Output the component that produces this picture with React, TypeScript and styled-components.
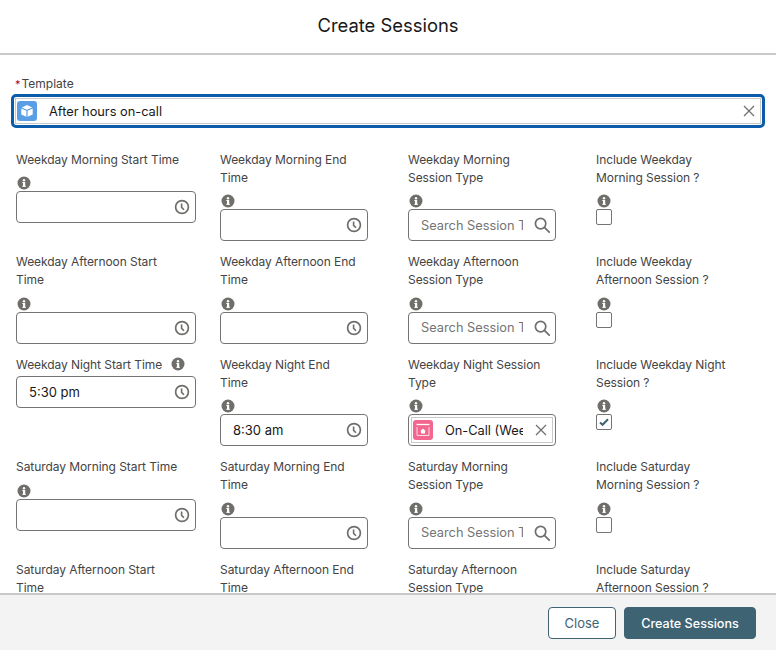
import styled, { createGlobalStyle } from "styled-components";

const GlobalStyle = createGlobalStyle`
  html, body {
    margin: 0;
    padding: 0;
    background: #fff;
  }
  body {
    font-family: Inter, "Liberation Sans", sans-serif;
    color: #181818;
  }
`;

type FieldDef = {
  label: string;
  kind: "time" | "search" | "lookup" | "check";
  value?: string;
  checked?: boolean;
  inlineInfo?: boolean;
};

const rows: FieldDef[][] = [
  [
    { label: "Weekday Morning Start Time", kind: "time" },
    { label: "Weekday Morning End Time", kind: "time" },
    { label: "Weekday Morning Session Type", kind: "search" },
    { label: "Include Weekday Morning Session ?", kind: "check" },
  ],
  [
    { label: "Weekday Afternoon Start Time", kind: "time" },
    { label: "Weekday Afternoon End Time", kind: "time" },
    { label: "Weekday Afternoon Session Type", kind: "search" },
    { label: "Include Weekday Afternoon Session ?", kind: "check" },
  ],
  [
    { label: "Weekday Night Start Time", kind: "time", value: "5:30 pm", inlineInfo: true },
    { label: "Weekday Night End Time", kind: "time", value: "8:30 am" },
    { label: "Weekday Night Session Type", kind: "lookup", value: "On-Call (Weekday)" },
    { label: "Include Weekday Night Session ?", kind: "check", checked: true },
  ],
  [
    { label: "Saturday Morning Start Time", kind: "time" },
    { label: "Saturday Morning End Time", kind: "time" },
    { label: "Saturday Morning Session Type", kind: "search" },
    { label: "Include Saturday Morning Session ?", kind: "check" },
  ],
  [
    { label: "Saturday Afternoon Start Time", kind: "time" },
    { label: "Saturday Afternoon End Time", kind: "time" },
    { label: "Saturday Afternoon Session Type", kind: "search" },
    { label: "Include Saturday Afternoon Session ?", kind: "check" },
  ],
];

const InfoIcon = () => (
  <svg width="14" height="14" viewBox="0 0 14 14">
    <circle cx="7" cy="7" r="6.5" fill="#706e6b" />
    <rect x="6" y="6" width="2.2" height="4.6" fill="#fff" />
    <rect x="5.3" y="6" width="1.5" height="1" fill="#fff" />
    <rect x="5.3" y="9.8" width="3.6" height="1" fill="#fff" />
    <circle cx="7" cy="4.2" r="1.2" fill="#fff" />
  </svg>
);

const ClockIcon = () => (
  <svg width="16" height="16" viewBox="0 0 16 16" fill="none" stroke="#706e6b">
    <circle cx="8" cy="8" r="6.4" strokeWidth="1.7" />
    <path d="M7.6 4.4v4l2.4 2.4" strokeWidth="1.6" />
  </svg>
);

const SearchIcon = () => (
  <svg width="16" height="16" viewBox="0 0 16 16" fill="none" stroke="#706e6b" strokeWidth="1.7">
    <circle cx="6.6" cy="6.6" r="5.2" />
    <path d="M10.4 10.4l4.8 4.8" strokeLinecap="round" />
  </svg>
);

const CloseIcon = () => (
  <svg width="12" height="12" viewBox="0 0 12 12" stroke="#706e6b" strokeWidth="1.2">
    <path d="M1 1l10 10M11 1L1 11" />
  </svg>
);

const CubeIcon = () => (
  <svg width="14" height="14" viewBox="0 0 14 14" fill="#fff">
    <path d="M7 1l5.2 2.4L7 5.8 1.8 3.4z" />
    <path d="M1.3 4.5l5.1 2.3v6L1.3 10.4z" />
    <path d="M12.7 4.5L7.6 6.8v6l5.1-2.4z" />
  </svg>
);

const CalendarIcon = () => (
  <svg width="16" height="16" viewBox="0 0 16 16" fill="none">
    <path d="M1.5 2.5h13" stroke="#fff" strokeWidth="1.3" />
    <path d="M2 5v8.5h12V5" stroke="#fff" strokeWidth="1" strokeOpacity=".75" />
    <path d="M8 6.6l2.8 2.6H10v2.2H6V9.2h-.8z" fill="#fff" />
  </svg>
);

const CheckIcon = () => (
  <svg width="10" height="8" viewBox="0 0 10 8" fill="none" stroke="#3e6373" strokeWidth="2">
    <path d="M1 4.4l2.6 2.4L9 1.2" />
  </svg>
);

const Control = ({ field }: { field: FieldDef }) => {
  if (field.kind === "check") {
    return <CheckBox>{field.checked && <CheckIcon />}</CheckBox>;
  }
  if (field.kind === "time") {
    return (
      <InputBox>
        <InputValue>{field.value}</InputValue>
        <ClockIcon />
      </InputBox>
    );
  }
  if (field.kind === "search") {
    return (
      <SearchBox>
        <Clipped $muted>Search Session Type</Clipped>
        <SearchIcon />
      </SearchBox>
    );
  }
  return (
    <LookupOuter>
      <Pill>
        <ObjectIcon $color="#f2668f">
          <CalendarIcon />
        </ObjectIcon>
        <Clipped>{field.value}</Clipped>
        <CloseIcon />
      </Pill>
    </LookupOuter>
  );
};

const App = () => {
  return (
    <Page>
      <GlobalStyle />
      <Header>Create Sessions</Header>
      <Body>
        <TemplateLabel>
          <Required>*</Required>Template
        </TemplateLabel>
        <FocusRing>
          <TemplatePill>
            <ObjectIcon $color="#5a9fe6">
              <CubeIcon />
            </ObjectIcon>
            <TemplateValue>After hours on-call</TemplateValue>
            <CloseIcon />
          </TemplatePill>
        </FocusRing>
        <Grid>
          {rows.map((row) =>
            row.map((field) => (
              <Field key={field.label}>
                <Label $inline={field.inlineInfo}>
                  {field.label}
                  {field.inlineInfo && (
                    <InlineInfo>
                      <InfoIcon />
                    </InlineInfo>
                  )}
                </Label>
                {!field.inlineInfo && (
                  <InfoLine>
                    <InfoIcon />
                  </InfoLine>
                )}
                <Control field={field} />
              </Field>
            ))
          )}
        </Grid>
      </Body>
      <Footer>
        <GhostButton>Close</GhostButton>
        <BrandButton>Create Sessions</BrandButton>
      </Footer>
    </Page>
  );
};

export default App;

const Page = styled.div`
  width: 776px;
  height: 650px;
  display: flex;
  flex-direction: column;
  overflow: hidden;
  background: #fff;
`;
const Header = styled.div`
  height: 49px;
  padding-bottom: 4px;
  flex: none;
  border-bottom: 2px solid #c9c9c9;
  display: flex;
  align-items: center;
  justify-content: center;
  font-size: 18.4px;
  font-weight: 400;
  color: #181818;
`;
const Body = styled.div`
  flex: 1;
  min-height: 0;
  overflow: hidden;
  padding: 20px 11px 0 11px;
`;
const TemplateLabel = styled.div`
  padding-left: 4px;
  height: 19px;
  font-size: 12px;
  line-height: 17px;
  color: #444;
`;
const Required = styled.span`
  color: #ba0517;
  margin-right: 1px;
  font-size: 11px;
`;
const FocusRing = styled.div`
  width: 754px;
  height: 34px;
  box-sizing: border-box;
  border: 3px solid #0b5cab;
  border-radius: 5px;
  padding: 1px;
`;
const TemplatePill = styled.div`
  height: 100%;
  box-sizing: border-box;
  border: 1px solid #c9c9c9;
  display: flex;
  align-items: center;
  padding: 0 5px 0 1px;
`;
const TemplateValue = styled.span`
  flex: 1;
  margin-left: 12px;
  font-size: 12.8px;
  color: #181818;
`;
const ObjectIcon = styled.span<{ $color: string }>`
  flex: none;
  width: 20px;
  height: 20px;
  border-radius: 3px;
  background: ${(p) => p.$color};
  display: flex;
  align-items: center;
  justify-content: center;
`;
const Grid = styled.div`
  display: grid;
  grid-template-columns: 204px 188px 188px 1fr;
  row-gap: 12px;
  padding: 22.5px 0 0 5px;
`;
const Field = styled.div`
  min-width: 0;
  &:nth-child(4n + 1) {
    padding-right: 24px;
  }
  &:nth-child(4n + 2),
  &:nth-child(4n + 3) {
    padding-right: 40px;
  }
  &:nth-child(4n) {
    padding-right: 21px;
  }
`;
const Label = styled.div<{ $inline?: boolean }>`
  padding-right: 11px;
  margin-bottom: ${(p) => (p.$inline ? "2.5px" : "0")};
  font-size: 12px;
  line-height: 18px;
  letter-spacing: -0.07px;
  color: #444;
`;
const InlineInfo = styled.span`
  display: inline-block;
  margin-left: 8.5px;
  height: 14px;
  vertical-align: -2px;
`;
const InfoLine = styled.div`
  height: 22.5px;
  box-sizing: border-box;
  padding-top: 7.5px;
  line-height: 0;
  padding-left: 1px;
`;
const InputBox = styled.div`
  height: 32px;
  box-sizing: border-box;
  border: 1px solid #747474;
  border-radius: 4px;
  background: #fff;
  display: flex;
  align-items: center;
  padding: 0 5px 0 12px;
`;
const InputValue = styled.span`
  flex: 1;
  font-size: 13px;
  color: #181818;
`;
const SearchBox = styled(InputBox)`
  gap: 11px;
`;
const Clipped = styled.span<{ $muted?: boolean }>`
  flex: 1;
  min-width: 0;
  overflow: hidden;
  white-space: nowrap;
  font-size: 12.8px;
  color: ${(p) => (p.$muted ? "#747474" : "#181818")};
`;
const LookupOuter = styled.div`
  height: 32px;
  box-sizing: border-box;
  border: 1px solid #747474;
  border-radius: 4px;
  padding: 2px;
`;
const Pill = styled.div`
  height: 100%;
  box-sizing: border-box;
  border: 1px solid #c9c9c9;
  display: flex;
  align-items: center;
  gap: 12px;
  padding: 0 5px 0 1px;
`;
const CheckBox = styled.div`
  width: 16px;
  height: 16px;
  box-sizing: border-box;
  border: 1px solid #747474;
  border-radius: 2px;
  display: flex;
  align-items: center;
  justify-content: center;
`;
const Footer = styled.div`
  height: 55px;
  flex: none;
  border-top: 2px solid #c9c9c9;
  background: #f3f3f3;
  display: flex;
  justify-content: flex-end;
  align-items: center;
  gap: 8px;
  padding: 0 20px 0 0;
`;
const GhostButton = styled.button`
  width: 68px;
  height: 32px;
  border: 1px solid #3e6373;
  border-radius: 4px;
  background: #fff;
  color: #3e6373;
  font-family: inherit;
  font-size: 13px;
  padding: 1px 0 0;
`;
const BrandButton = styled.button`
  width: 132px;
  height: 32px;
  border: 1px solid #3e6373;
  border-radius: 4px;
  background: #3e6373;
  color: #fff;
  font-family: inherit;
  font-size: 12.6px;
  font-weight: 500;
  padding: 1px 0 0;
`;
